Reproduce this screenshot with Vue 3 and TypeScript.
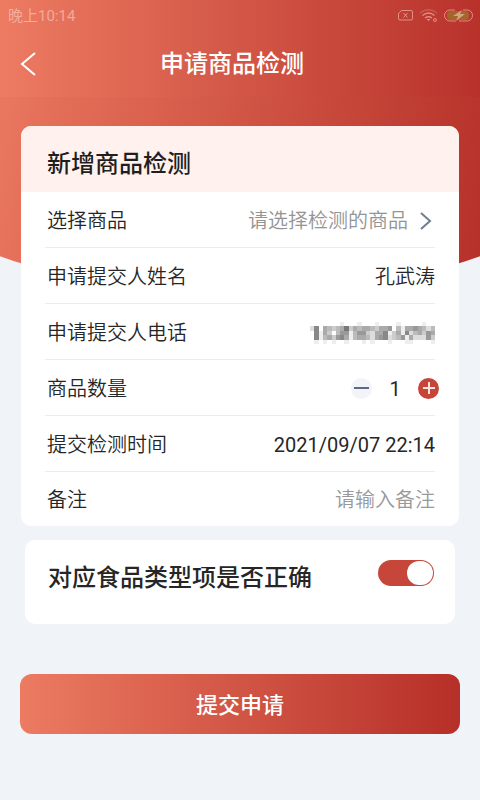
<script setup lang="ts">
import { ref } from 'vue'

const quantity = ref(1)
const remark = ref('')
const typeCorrect = ref(true)

function changeQuantity(step: number): void {
  quantity.value = Math.max(1, quantity.value + step)
}

// Brightness of each block of the masked phone number, one hex digit per block.
const maskRows: string[] = [
  'fffffffefffefffeffffefffffeff',
  'd8fabcba7cabaabcaa9fbeaa9abdb',
  'f8eacfb99eb99cdaa8ecae8dbac9a',
  'f8ebac98aebaabda98dcb9eaddd9c',
  'fefefeffefffefefffefffeeffffe',
]
const maskCells = maskRows.flatMap((row, y) =>
  [...row].map((shade, x) => ({ x, y, fill: `#${shade.repeat(3)}` })),
)
</script>

<template>
  <div class="page">
    <div class="backdrop" aria-hidden="true"></div>

    <div class="status">
      <span>晚上10:14</span>
      <svg class="status-icons" width="80" height="16" viewBox="0 0 80 16" fill="none" stroke="currentColor">
        <path d="M4.500 2.500H14Q15.500 2.500 15.500 4V10.500Q15.500 12 14 12H3Q1.500 12 1.500 10.500V5.500ZM6.500 5l4 4.500m0-4.500-4 4.500" />
        <path d="M23 5Q31.500-1.500 40 5" opacity=".4" stroke-width="1.500" />
        <path d="M25.500 7.500Q31.500 2.500 37.500 7.500M28 10Q31.500 7.500 35 10" stroke-width="1.500" />
        <path d="m29.500 11 2 2 2-2Z" fill="currentColor" stroke="none" />
        <circle cx="38" cy="12" r="1.500" />
        <rect x="50" y="3" width="22" height="9" rx="4" fill="#a4642a" stroke="none" />
        <path d="M58 2H53a5.500 5.500 0 0 0 0 11h6M66 2h4a5.500 5.500 0 0 1 0 11h-8" />
        <path d="m65 2-9 6h5l-2 5 9-7h-5Z" fill="currentColor" stroke="none" />
      </svg>
    </div>

    <header class="bar">
      <button class="back" type="button" aria-label="返回">
        <svg width="16" height="24" viewBox="0 0 16 24" fill="none" stroke="#fff" stroke-width="2"><path d="M15 1 2 12 15 23" /></svg>
      </button>
      <h1>申请商品检测</h1>
    </header>

    <form @submit.prevent>
      <section class="card">
        <h2>新增商品检测</h2>
        <div class="rows">
          <div class="row">
            <span id="product-label">选择商品</span>
            <button class="picker" type="button" aria-labelledby="product-label">
              请选择检测的商品
              <svg width="12" height="18" viewBox="0 0 12 18" fill="none" stroke="#747b94" stroke-width="2"><path d="m1 1 9 8-9 8" /></svg>
            </button>
          </div>
          <div class="row"><span>申请提交人姓名</span><span>孔武涛</span></div>
          <div class="row">
            <span>申请提交人电话</span>
            <svg class="mask" width="125" height="22" viewBox="0 0 29 5" preserveAspectRatio="none" shape-rendering="crispEdges">
              <rect v-for="cell in maskCells" :key="`${cell.x}-${cell.y}`" :x="cell.x" :y="cell.y" width="1" height="1" :fill="cell.fill" />
            </svg>
          </div>
          <div class="row">
            <span>商品数量</span>
            <div class="stepper">
              <button class="minus" type="button" aria-label="减少" @click="changeQuantity(-1)">
                <svg width="21" height="21" viewBox="0 0 21 21" stroke="#626780" stroke-width="2"><path d="M3 10h15" /></svg>
              </button>
              <output>{{ quantity }}</output>
              <button class="plus" type="button" aria-label="增加" @click="changeQuantity(1)">
                <svg width="21" height="21" viewBox="0 0 21 21" stroke="#fbe4df" stroke-width="2"><path d="M5 10h12M11 4v12" /></svg>
              </button>
            </div>
          </div>
          <div class="row"><span>提交检测时间</span><time datetime="2021-09-07T22:14">2021/09/07 22:14</time></div>
          <div class="row">
            <label for="remark">备注</label>
            <input id="remark" v-model="remark" class="remark" type="text" placeholder="请输入备注" />
          </div>
        </div>
      </section>

      <section class="card confirm">
        <label for="type-correct">对应食品类型项是否正确</label>
        <input id="type-correct" v-model="typeCorrect" class="switch" type="checkbox" role="switch" />
      </section>

      <button class="submit" type="submit">提交申请</button>
    </form>
  </div>
</template>

<style>
body {
  background: #f0f3f8;
}
</style>

<style scoped>
.page {
  position: relative;
  min-height: 100vh;
  overflow: hidden;
  background: #f0f3f8;
  color: #262626;
  font-family: Roboto, "Noto Sans CJK SC", sans-serif;
  font-size: 20px;
  line-height: 28px;
}

.page *,
.page *::before {
  box-sizing: border-box;
}

.backdrop {
  position: absolute;
  top: 0;
  left: 0;
  right: 0;
  height: 296px;
  background: linear-gradient(100deg, #eb7960, #b53029);
  clip-path: ellipse(100% 296px at 50% 0);
}

.status,
.bar {
  position: relative;
  background: linear-gradient(90deg, #ed7b62, #b8322b);
}

.status {
  display: flex;
  align-items: center;
  justify-content: space-between;
  height: 32px;
  padding: 0 3px 0 8px;
  color: rgb(255 225 215 / 50%);
  font-size: 15px;
}

.bar {
  display: grid;
  grid-template-columns: 56px 1fr 72px;
  align-items: center;
  height: 65px;
  padding-bottom: 2px;
  color: #fff;
}

.back {
  display: flex;
  padding: 4px 20px;
}

h1,
h2 {
  margin: 0;
  font-size: 24px;
  font-weight: 500;
}

h1 {
  text-align: center;
}

button {
  border: 0;
  padding: 0;
  background: none;
  color: inherit;
  font: inherit;
  cursor: pointer;
}

form {
  position: relative;
  padding: 29px 20px 20px;
}

.card {
  margin: 0 1px;
  overflow: hidden;
  border-radius: 10px;
  background: #fff;
}

h2 {
  padding: 24px 26px 14px;
  background: #fff1ee;
  color: #1f1f1f;
}

.rows {
  padding: 0 24px;
  font-family: Roboto, "Noto Sans CJK SC DemiLight", "Noto Sans CJK SC Light", "Noto Sans CJK SC", sans-serif;
}

.row {
  display: flex;
  align-items: center;
  justify-content: space-between;
  height: 56px;
  padding: 2px 0 0 2px;
  border-bottom: 1px solid #ededed;
}

.row:last-child {
  height: 54px;
  border-bottom: 0;
}

.picker {
  display: flex;
  align-items: center;
  gap: 12px;
  padding-right: 3px;
  color: #949494;
}

.stepper {
  display: flex;
  align-items: center;
  gap: 16px;
  margin-right: -4px;
}

.stepper button {
  display: flex;
  border-radius: 50%;
}

.minus {
  background: #f3f4f9;
}

.plus {
  background: #c54638;
}

output {
  width: 14px;
  text-align: center;
}

.remark {
  flex: 1;
  min-width: 0;
  border: 0;
  padding: 0;
  outline: 0;
  background: none;
  color: inherit;
  font: inherit;
  text-align: right;
}

.remark::placeholder {
  color: #999;
  opacity: 1;
}

.confirm {
  display: flex;
  align-items: flex-start;
  justify-content: space-between;
  min-height: 84px;
  margin: 14px 5px 0;
  padding: 20px 21px 20px 23px;
  font-size: 24px;
  font-weight: 500;
  line-height: 36px;
}

.switch {
  appearance: none;
  width: 56px;
  height: 26px;
  margin: 0;
  padding: 1px;
  border-radius: 13px;
  background: #ccc;
  cursor: pointer;
}

.switch::before {
  content: "";
  display: block;
  width: 26px;
  height: 24px;
  border-radius: 13px;
  background: #fff;
}

.switch:checked {
  background: #c64739;
}

.switch:checked::before {
  margin-left: auto;
}

.submit {
  display: block;
  width: 100%;
  height: 60px;
  margin-top: 50px;
  padding-top: 4px;
  border-radius: 12px;
  background: linear-gradient(90deg, #ec7b62, #b62f28);
  color: #fff;
  font-size: 22px;
  font-weight: 500;
}
</style>
